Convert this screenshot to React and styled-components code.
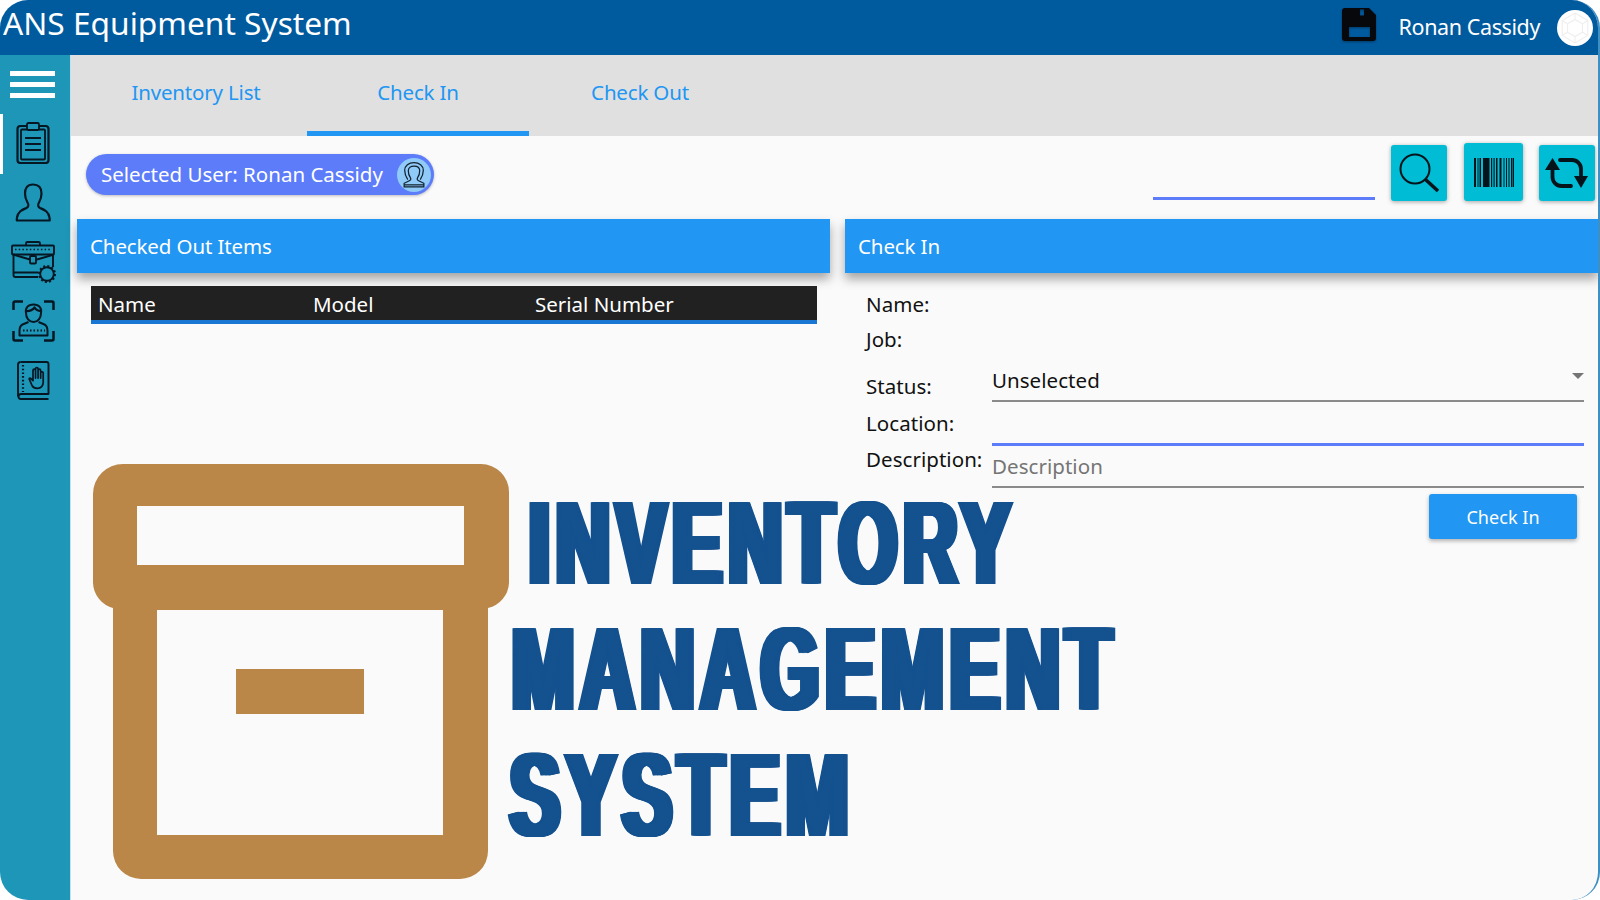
import React from "react";
import styled, { createGlobalStyle } from "styled-components";

const Global = createGlobalStyle`
  html, body { margin: 0; padding: 0; background: #fff; }
  body { font-family: "Noto Sans", "Open Sans", "Liberation Sans", sans-serif; }
  * { box-sizing: border-box; }
`;

const Frame = styled.div`
  position: relative;
  width: 1600px;
  height: 900px;
  border-radius: 28px;
  overflow: hidden;
  border-right: 2px solid #3d8fc4;
  display: flex;
  flex-direction: column;
  background: #fafafa;
`;

const Header = styled.header`
  height: 55px;
  flex: none;
  background: #005a9e;
  color: #fff;
  display: flex;
  align-items: center;
  padding: 0 5px 0 3px;
`;
const Title = styled.h1`
  margin: -11px 0 0;
  font-size: 31.7px;
  font-weight: 400;
  line-height: 45px;
`;
const HeaderRight = styled.div`
  margin-left: auto;
  display: flex;
  align-items: center;
`;
const SaveIcon = styled.svg`
  width: 34px;
  height: 33px;
  margin-top: -6px;
  margin-right: 23px;
  filter: drop-shadow(0 1px 1px rgba(0, 0, 0, 0.35));
`;
const UserName = styled.span`
  font-size: 21.5px;
  letter-spacing: -0.4px;
  margin-right: 17px;
  margin-top: -2px;
`;
const Avatar = styled.div`
  width: 36px;
  height: 36px;
  border-radius: 50%;
  background: #fff;
  display: grid;
  place-items: center;
`;

const Body = styled.div`
  flex: 1;
  display: flex;
  min-height: 0;
`;
const Sidebar = styled.nav`
  width: 71px;
  flex: none;
  background: #1e96b8;
  border-right: 1px solid #bfe3ef;
  display: flex;
  flex-direction: column;
`;
const MenuButton = styled.div`
  width: 45px;
  height: 59px;
  margin-left: 10px;
  padding-top: 16px;
  display: flex;
  flex-direction: column;
  gap: 6px;
  & > i {
    display: block;
    height: 5px;
    background: #fff;
  }
`;
const NavItem = styled.div`
  position: relative;
  width: 100%;
  height: 59.5px;
  flex: none;
  padding: 0 4px 2px 0;
  display: flex;
  align-items: center;
  justify-content: center;
  ${(p) =>
    p.$active &&
    `&::before { content: ""; position: absolute; left: 0; top: 0; width: 3px; height: 100%; background: #fff; }`}
`;

const Main = styled.main`
  flex: 1;
  min-width: 0;
  display: flex;
  flex-direction: column;
`;
const Tabs = styled.div`
  height: 81px;
  flex: none;
  background: #e0e0e0;
  display: flex;
  padding-left: 14px;
`;
const Tab = styled.div`
  width: 222px;
  display: flex;
  align-items: center;
  justify-content: center;
  color: #2196f3;
  font-size: 20.5px;
  letter-spacing: -0.18px;
  padding-bottom: 3px;
  border-bottom: 5px solid ${(p) => (p.$active ? "#2196f3" : "transparent")};
`;
const Toolbar = styled.div`
  height: 83px;
  flex: none;
  display: flex;
  align-items: flex-start;
  padding: 9px 3px 0 15px;
`;
const Chip = styled.div`
  margin-top: 9px;
  height: 41px;
  width: 348px;
  border-radius: 21px;
  background: #5c7cfa;
  color: #fff;
  display: flex;
  align-items: center;
  justify-content: space-between;
  padding: 0 3px 2px 15px;
  font-size: 20.5px;
  box-shadow: 0 1px 3px rgba(0, 0, 0, 0.25);
`;
const ChipIcon = styled.div`
  width: 34px;
  height: 34px;
  margin-bottom: -2px;
  border-radius: 50%;
  background: #90caf9;
  display: grid;
  place-items: center;
`;
const SearchField = styled.div`
  margin-left: auto;
  margin-top: 52px;
  width: 222px;
  height: 3px;
  background: #5c7cfa;
  margin-right: 16px;
`;
const ToolButton = styled.div`
  width: ${(p) => p.$w || 56}px;
  height: ${(p) => p.$h || 56}px;
  margin-left: ${(p) => p.$ml || 0}px;
  margin-top: ${(p) => p.$mt || 0}px;
  background: #00bcd4;
  border-radius: 3px;
  display: grid;
  place-items: center;
  box-shadow: 0 1px 4px rgba(0, 0, 0, 0.35);
`;
const Columns = styled.div`
  flex: 1;
  display: grid;
  grid-template-columns: 753px 1fr;
  column-gap: 15px;
  padding-left: 6px;
  min-height: 0;
`;
const Panel = styled.section`
  display: flex;
  flex-direction: column;
  min-width: 0;
`;
const PanelHeader = styled.div`
  height: 54px;
  flex: none;
  background: #2196f3;
  color: #fff;
  display: flex;
  align-items: center;
  padding-left: 13px;
  font-size: 20.5px;
  letter-spacing: -0.12px;
  box-shadow: 0 6px 10px rgba(0, 0, 0, 0.35);
`;
const TableHead = styled.div`
  margin: 13px 13px 0 14px;
  height: 38px;
  background: #212121;
  color: #fff;
  border-bottom: 4px solid #1976d2;
  display: grid;
  grid-template-columns: 215px 222px 1fr;
  align-items: center;
  padding: 2px 0 0 7px;
  font-size: 20.5px;
`;
const Form = styled.div`
  padding: 17px 14px 0 21px;
  color: #111;
  font-size: 20.5px;
  letter-spacing: 0.05px;
`;
const Row = styled.div`
  height: ${(p) => p.$h}px;
  display: grid;
  grid-template-columns: 126px 1fr;
`;
const Label = styled.div`
  padding-top: ${(p) => p.$pt || 0}px;
  line-height: 28px;
`;
const Field = styled.div`
  position: relative;
  height: ${(p) => p.$h}px;
  line-height: 28px;
  padding-top: ${(p) => p.$pt || 0}px;
  border-bottom: ${(p) => (p.$focus ? "3px solid #5c7cfa" : "2px solid #8a8a8a")};
  color: ${(p) => (p.$placeholder ? "#757575" : "#111")};
`;
const Caret = styled.span`
  position: absolute;
  right: 0;
  top: 14px;
  width: 0;
  height: 0;
  border-left: 6px solid transparent;
  border-right: 6px solid transparent;
  border-top: 6px solid #757575;
`;
const FormActions = styled.div`
  display: flex;
  justify-content: flex-end;
  padding: 6px 7px 0 0;
`;
const PrimaryButton = styled.div`
  width: 148px;
  height: 45px;
  border-radius: 3px;
  background: #2196f3;
  color: #fff;
  display: grid;
  place-items: center;
  font-size: 18px;
  box-shadow: 0 2px 4px rgba(0, 0, 0, 0.3);
`;

const Promo = styled.div`
  position: absolute;
  left: 92px;
  top: 463px;
  display: flex;
  align-items: flex-start;
  pointer-events: none;
`;
const BigLines = styled.div`
  margin-left: 7px;
  margin-top: 39px;
  display: flex;
  flex-direction: column;
  gap: 43px;
`;
const BigLine = styled.div`
  height: 83px;
  line-height: 83px;
  margin-left: ${(p) => p.$ml || 0}px;
  font-family: "Liberation Sans", Arial, sans-serif;
  font-weight: 700;
  font-size: 118px;
  letter-spacing: 10px;
  color: #14518f;
  text-shadow:
    2px 0 0 #14518f, -2px 0 0 #14518f, 4px 0 0 #14518f, -4px 0 0 #14518f,
    6px 0 0 #14518f, -6px 0 0 #14518f, 7px 0 0 #14518f, -7px 0 0 #14518f;
  white-space: nowrap;
  transform: scaleX(${(p) => p.$sx});
  transform-origin: left center;
`;

const ink = "#041722";

const Clipboard = () => (
  <svg width="34" height="42" viewBox="0 0 34 42" fill="none" stroke={ink} strokeWidth="1.8">
    <rect x="1.500" y="4" width="31" height="37" rx="3" strokeWidth="2.200" />
    <rect x="5" y="7.500" width="24" height="30" rx="1" />
    <rect x="11" y="1" width="12" height="7" rx="1.500" fill="#1e96b8" />
    <path d="M9 16h16M9 22h16M9 28h16" strokeWidth="2.200" />
  </svg>
);
const Person = () => (
  <svg width="36" height="39" viewBox="0 0 36 39" fill="none" stroke={ink} strokeWidth="2.200" strokeLinejoin="round">
    <path d="M18 1.500c6 0 8.500 4 8.500 9 0 4-1 6.500-2.500 9-1.500 2.500-1 4.500 1 5.500 3.500 1.500 8.500 3 9.500 9.500.2 1 .2 3 .2 3H1.800s0-2 .2-3c1-6.500 6-8 9.500-9.500 2-1 2.500-3 1-5.500-1.500-2.500-2.500-5-2.500-9 0-5 2-9 8-9z" />
  </svg>
);
const Briefcase = () => (
  <svg width="45" height="42" viewBox="0 0 45 42" fill="none" stroke={ink} strokeWidth="1.900" strokeLinejoin="round">
    <path d="M15 4.500V2.500a1.500 1.500 0 0 1 1.500-1.500h11a1.500 1.500 0 0 1 1.500 1.500v2" />
    <rect x="1" y="4.500" width="42" height="9" rx="1" />
    <path d="M4 8.500h36" strokeDasharray="1.500 2.200" strokeWidth="1.700" />
    <path d="M2 13.500l17 5M43 13.500l-17 5" />
    <path d="M2.500 14v20a2 2 0 0 0 2 2H27M42 14v12M2.500 31.500H27" />
    <rect x="19" y="15" width="6" height="7.500" rx="1" fill="#1e96b8" />
    <circle cx="36" cy="33" r="6.800" fill="#1e96b8" />
    <circle cx="36" cy="33" r="8" strokeDasharray="2 2.200" strokeWidth="2" />
  </svg>
);
const FaceScan = () => (
  <svg width="43" height="42" viewBox="0 0 43 42" fill="none" stroke={ink} strokeWidth="2" strokeLinejoin="round">
    <path d="M1.500 10V3a1.500 1.500 0 0 1 1.500-1.500h8M32 1.500h8A1.500 1.500 0 0 1 41.500 3v7M1.500 31v8A1.500 1.500 0 0 0 3 40.500h8M32 40.500h8a1.500 1.500 0 0 0 1.500-1.500v-8" strokeWidth="2.500" />
    <path d="M14 13c-1-5 2-8.500 7.500-8.500S30 8 29 13c0 5-3 9-7.500 9S14 18 14 13z" />
    <path d="M14 11c3 .5 7-1 8.500-3.500C24 10 27 11 29 11" strokeWidth="2.400" />
    <path d="M16.500 22l-6 2.500C8.500 25.500 7.500 28 7.500 31v4.500h28V31c0-3-1-5.500-3-6.500l-6-2.500" />
    <path d="M11 30.500h22" strokeDasharray="1.500 2" />
  </svg>
);
const HandBook = () => (
  <svg width="33" height="39" viewBox="0 0 33 39" fill="none" stroke={ink} strokeWidth="1.900" strokeLinejoin="round">
    <path d="M3.500 1h26a2 2 0 0 1 2 2v30H4a2.500 2.500 0 0 0 0 5h27.500" />
    <path d="M1 35.500V3.500A2.500 2.500 0 0 1 3.500 1" />
    <path d="M6 4v27" strokeDasharray="1.600 2.100" strokeWidth="2.200" />
    <g transform="translate(7.500 3.500) scale(.85)" strokeWidth="2">
      <path d="M6 18l3 7c1 2 3 3 6 3 5 0 7-3 7-7V10a1.500 1.500 0 0 0-3 0v6-9a1.500 1.500 0 0 0-3 0v9-11a1.500 1.500 0 0 0-3 0v11-9a1.500 1.500 0 0 0-3 0v12l-2.500-2.500c-1.300-1-2.700.3-1.500 1.500z" />
    </g>
  </svg>
);
const ChipUser = () => (
  <svg width="28" height="28" viewBox="0 0 27 27" fill="none" stroke="#13222e" strokeWidth="1.200">
    <path d="M7.500 18C5.500 15 4.500 12 4.500 9c0-4.500 4-7.500 9-7.500s9 3 9 7.500c0 3-1 6-3 9" />
    <path d="M10 16c-1.500-2-2-4-2-6.500C8 6.500 10.500 5 13.500 5S19 6.500 19 9.500c0 2.500-.5 4.500-2 6.500-.8 1.200-.5 2.300 1 3l5 2.500V25H4v-3.500L9 19c1.500-.7 1.800-1.800 1-3z" />
    <path d="M4 23h19" />
  </svg>
);
const Hexagon = () => (
  <svg width="32" height="32" viewBox="0 0 30 30" fill="none" stroke="#eeeeee" strokeWidth="1">
    <path d="M15 1l12 7v14l-12 7-12-7V8z" />
    <path d="M15 7l7 4v8l-7 4-7-4v-8z" />
    <path d="M15 1v6M27 8l-5 3M27 22l-5-3M15 29v-6M3 22l5-3M3 8l5 3" />
  </svg>
);
const SearchIcon = () => (
  <svg width="42" height="42" viewBox="0 0 42 42" fill="none" stroke="#04141a">
    <circle cx="17" cy="17" r="14.500" strokeWidth="2" />
    <path d="M27.500 27.500L40 39" strokeWidth="3.500" />
  </svg>
);
const Barcode = () => {
  const bars = [
    [0, 2], [3.500, 1], [5.500, 1.500], [9, 6.500], [17, 1.200], [19.500, 1.200], [22, 1.500], [25.500, 2], [29.500, 1], [32, 1], [34.500, 1], [37, 1.500], [39, 1],
  ];
  return (
    <svg width="40" height="29" viewBox="0 0 40 29" fill="#04141a">
      {bars.map(([x, w]) => (
        <rect key={x} x={x} y="0" width={w} height="29" />
      ))}
    </svg>
  );
};
const Refresh = () => (
  <svg width="44" height="32" viewBox="0 0 44 32" fill="none" stroke="#04141a" strokeWidth="3.800" strokeLinecap="round">
    <path d="M7.500 12v8a9 9 0 0 0 9 9H26" />
    <path d="M36 20v-8a9 9 0 0 0-9-9H15" />
    <path d="M0 13L7.500 1 15 13z" fill="#04141a" stroke="none" />
    <path d="M29 19h14l-7 12z" fill="#04141a" stroke="none" />
  </svg>
);
const FloppyGlyph = () => (
  <path
    fill="#06080b"
    fillRule="evenodd"
    d="M3 0h24l7 7v23a3 3 0 0 1-3 3H3a3 3 0 0 1-3-3V3a3 3 0 0 1 3-3zM18 1.500v6h4v-6zM7 19v10h21V19z"
  />
);
const BoxLogo = () => (
  <svg width="417" height="416" viewBox="0 0 417 416" fill="#bb8749">
    <path fillRule="evenodd" d="M31 1h358a28 28 0 0 1 28 28v91a27 27 0 0 1-21 25v243a28 28 0 0 1-28 28H49a28 28 0 0 1-28-28V145A27 27 0 0 1 1 120V31A30 30 0 0 1 31 1zM45 43v59h327V43zM65 147v225h286V147z" />
    <rect x="144" y="206" width="128" height="45" />
  </svg>
);

export default function App() {
  return (
    <>
      <Global />
      <Frame>
        <Header>
          <Title>ANS Equipment System</Title>
          <HeaderRight>
            <SaveIcon viewBox="0 0 34 33">
              <FloppyGlyph />
            </SaveIcon>
            <UserName>Ronan Cassidy</UserName>
            <Avatar>
              <Hexagon />
            </Avatar>
          </HeaderRight>
        </Header>
        <Body>
          <Sidebar>
            <MenuButton>
              <i />
              <i />
              <i />
            </MenuButton>
            <NavItem $active>
              <Clipboard />
            </NavItem>
            <NavItem>
              <Person />
            </NavItem>
            <NavItem>
              <Briefcase />
            </NavItem>
            <NavItem>
              <FaceScan />
            </NavItem>
            <NavItem>
              <HandBook />
            </NavItem>
          </Sidebar>
          <Main>
            <Tabs>
              <Tab>Inventory List</Tab>
              <Tab $active>Check In</Tab>
              <Tab>Check Out</Tab>
            </Tabs>
            <Toolbar>
              <Chip>
                Selected User: Ronan Cassidy
                <ChipIcon>
                  <ChipUser />
                </ChipIcon>
              </Chip>
              <SearchField />
              <ToolButton>
                <SearchIcon />
              </ToolButton>
              <ToolButton $w={59} $h={58} $ml={17} $mt={-2}>
                <Barcode />
              </ToolButton>
              <ToolButton $ml={16}>
                <Refresh />
              </ToolButton>
            </Toolbar>
            <Columns>
              <Panel>
                <PanelHeader>Checked Out Items</PanelHeader>
                <TableHead>
                  <span>Name</span>
                  <span>Model</span>
                  <span>Serial Number</span>
                </TableHead>
              </Panel>
              <Panel>
                <PanelHeader>Check In</PanelHeader>
                <Form>
                  <Row $h={35}>
                    <Label>Name:</Label>
                  </Row>
                  <Row $h={34}>
                    <Label>Job:</Label>
                  </Row>
                  <Row $h={43}>
                    <Label $pt={13}>Status:</Label>
                    <Field $h={43} $pt={7}>
                      Unselected
                      <Caret />
                    </Field>
                  </Row>
                  <Row $h={42}>
                    <Label $pt={7}>Location:</Label>
                    <Field $h={44} $focus />
                  </Row>
                  <Row $h={44}>
                    <Label $pt={1}>Description:</Label>
                    <Field $h={44} $pt={8} $placeholder>
                      Description
                    </Field>
                  </Row>
                  <FormActions>
                    <PrimaryButton>Check In</PrimaryButton>
                  </FormActions>
                </Form>
              </Panel>
            </Columns>
          </Main>
        </Body>
        <Promo>
          <BoxLogo />
          <BigLines>
            <BigLine $ml={13} $sx={0.632}>INVENTORY</BigLine>
            <BigLine $ml={-4} $sx={0.632}>MANAGEMENT</BigLine>
            <BigLine $ml={-6} $sx={0.632}>SYSTEM</BigLine>
          </BigLines>
        </Promo>
      </Frame>
    </>
  );
}
